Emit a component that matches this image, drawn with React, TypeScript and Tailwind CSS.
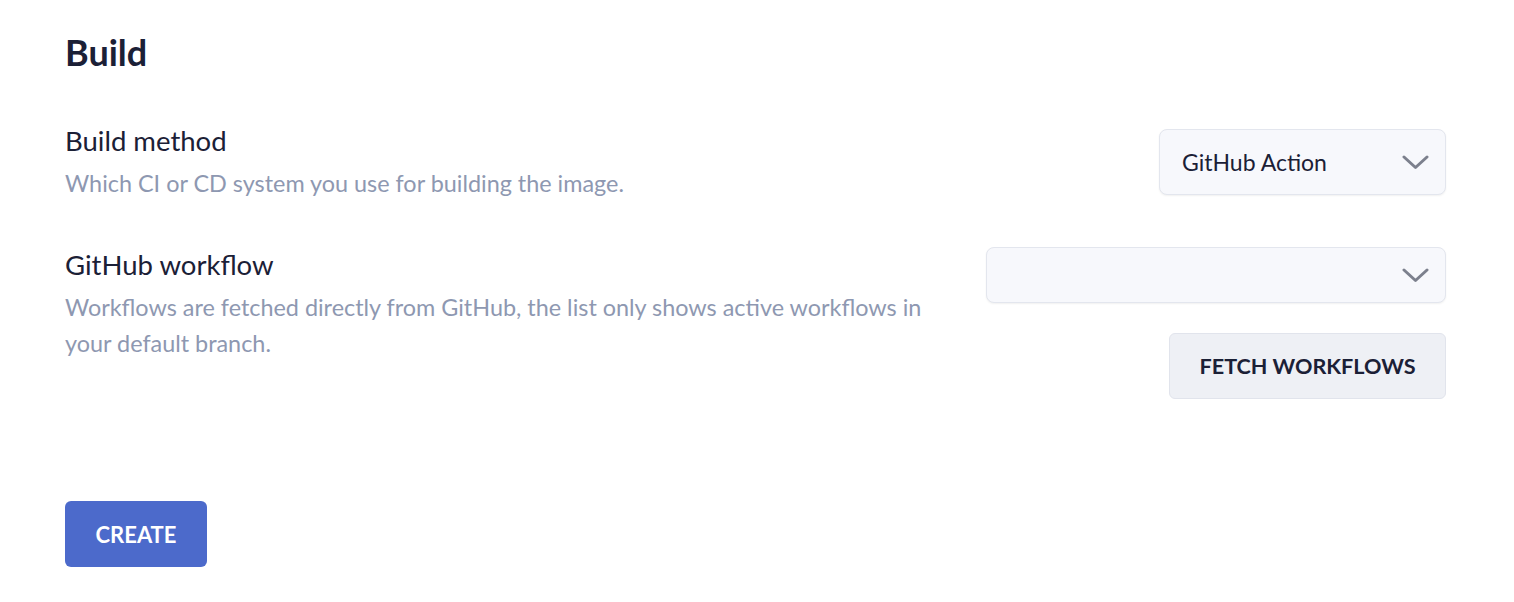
import React from "react";

function Chevron() {
  return (
    <svg width="27" height="15" viewBox="0 0 27 15" fill="none">
      <path d="M2 2 L13.5 12.5 L25 2" stroke="#7c808d" strokeWidth="3" strokeLinecap="round" strokeLinejoin="round" />
    </svg>
  );
}

export default function App() {
  return (
    <div className="w-[1514px] h-[602px] bg-white font-['Lato',sans-serif] text-[#1b2036] pl-[65px] pr-[68px] pt-[28px]">
      <h2 className="text-[36px] font-bold leading-[48px]">Build</h2>

      <div className="mt-[53px] flex justify-between items-start">
        <div className="-mt-[6px]">
          <div className="text-[27.5px] leading-[36px]">Build method</div>
          <div className="mt-[6px] text-[23.4px] leading-[36px] text-[#8e98b1]">Which CI or CD system you use for building the image.</div>
        </div>
        <div className="w-[287px] h-[66px] rounded-[8px] border border-[#e3e6ee] bg-[#f7f8fc] shadow-[0_1px_2px_rgba(0,0,0,0.06)] flex items-center justify-between pl-[22px] pr-[16px]">
          <span className="text-[23px]">GitHub Action</span>
          <Chevron />
        </div>
      </div>

      <div className="mt-[46px] flex justify-between items-start">
        <div className="w-[880px]">
          <div className="text-[27.5px] leading-[36px]">GitHub workflow</div>
          <div className="mt-[6px] text-[23.4px] leading-[36px] text-[#8e98b1]">Workflows are fetched directly from GitHub, the list only shows active workflows in your default branch.</div>
        </div>
        <div className="w-[460px] flex flex-col items-end">
          <div className="w-full h-[56px] rounded-[8px] border border-[#e3e6ee] bg-[#f7f8fc] shadow-[0_1px_2px_rgba(0,0,0,0.06)] flex items-center justify-end pr-[16px]">
            <Chevron />
          </div>
          <button className="mt-[30px] w-[277px] h-[66px] rounded-[6px] border border-[#e1e4ec] bg-[#eef0f5] text-[21.6px] font-bold text-[#1b2036]">
            FETCH WORKFLOWS
          </button>
        </div>
      </div>

      <button className="mt-[102px] w-[142px] h-[66px] rounded-[6px] bg-[#4c6acb] text-white text-[22px] font-bold">
        CREATE
      </button>
    </div>
  );
}
